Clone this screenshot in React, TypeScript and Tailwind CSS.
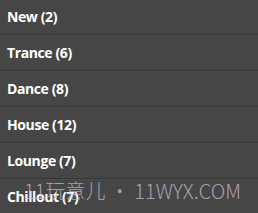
const genres = [
  { name: "New", count: 2 },
  { name: "Trance", count: 6 },
  { name: "Dance", count: 8 },
  { name: "House", count: 12 },
  { name: "Lounge", count: 7 },
  { name: "Chillout", count: 7 },
];

export default function App() {
  return (
    <div className="relative h-[213px] w-[258px] overflow-hidden bg-[#464646] font-['Open_Sans',sans-serif]">
      <ul className="-mt-px">
        {genres.map((g) => (
          <li
            key={g.name}
            className="flex h-[36px] items-center border-b border-[#353535] px-[7px] shadow-[0_1px_0_#4c4c4c]"
          >
            <span className="text-[14px] font-bold tracking-[-0.4px] text-white">
              {g.name} ({g.count})
            </span>
          </li>
        ))}
      </ul>
      {/* watermark over the list */}
      <div className="pointer-events-none absolute left-[24px] top-[181px] whitespace-nowrap font-['Noto_Sans_CJK_SC',sans-serif] text-[20px] font-light leading-none text-[#c4b6cc]/80">
        11玩意儿 • 11WYX.COM
      </div>
    </div>
  );
}
